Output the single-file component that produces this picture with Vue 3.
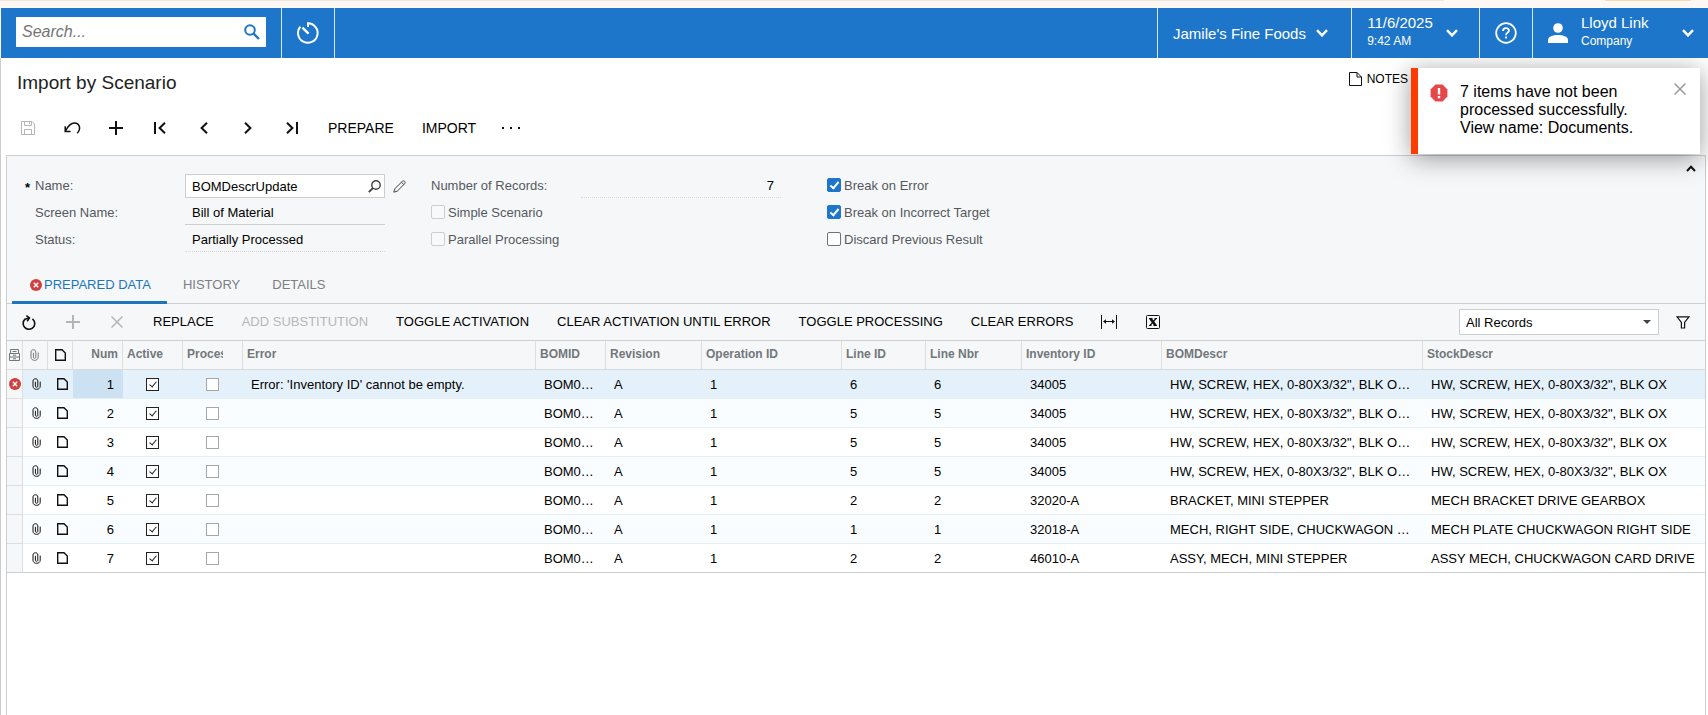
<template>
  <div class="page">
    <div class="strip">
      <span class="strip-tab"></span>
      <span class="strip-mark"></span>
    </div>

    <header class="topbar">
      <form class="search" @submit.prevent>
        <input v-model="search" type="text" placeholder="Search..." aria-label="Search" />
        <button type="submit" aria-label="Run search">
          <svg width="16" height="16" viewBox="0 0 16 16" fill="none" stroke="#1d76c9" stroke-width="2">
            <circle cx="6" cy="6" r="4.8" />
            <path d="M9.6 9.6 15 15" stroke-width="2.4" />
          </svg>
        </button>
      </form>
      <button class="top-item recent" aria-label="Recent">
        <svg width="24" height="24" viewBox="0 0 24 24" fill="none" stroke="#fff" stroke-width="2">
          <path d="M12 6V2.2A9.8 9.8 0 1 1 4.4 5.6" />
          <path d="M6.4 6.6 12.6 12.6" stroke-width="2.4" />
        </svg>
      </button>
      <span class="spacer"></span>
      <button class="top-item tenant">
        <span>Jamile's Fine Foods</span>
        <svg class="caret" viewBox="0 0 12 8"><path d="M1 1.2 6 6.4 11 1.2" /></svg>
      </button>
      <button class="top-item date">
        <span class="stack">
          <span>11/6/2025</span>
          <small>9:42 AM</small>
        </span>
        <svg class="caret" viewBox="0 0 12 8"><path d="M1 1.2 6 6.4 11 1.2" /></svg>
      </button>
      <button class="top-item help" aria-label="Help">
        <svg width="22" height="22" viewBox="0 0 22 22" fill="none" stroke="#fff" stroke-width="1.8">
          <circle cx="11" cy="11" r="9.8" />
          <path d="M8 9C8 5.2 14 5.2 14 8.6 14 10.6 11 10.8 11 13.2" />
          <path d="M11 14.6V16.6" />
        </svg>
      </button>
      <button class="top-item user">
        <svg width="20" height="20" viewBox="0 0 20 20" fill="#fff">
          <circle cx="10" cy="5" r="4.8" />
          <path d="M0 20V17C0 13.4 5 12 10 12S20 13.4 20 17V20Z" />
        </svg>
        <span class="stack">
          <span>Lloyd Link</span>
          <small>Company</small>
        </span>
        <svg class="caret" viewBox="0 0 12 8"><path d="M1 1.2 6 6.4 11 1.2" /></svg>
      </button>
    </header>

    <main class="content">
      <div class="title-row">
        <h1>Import by Scenario</h1>
        <button class="notes">
          <svg width="13" height="14" viewBox="0 0 13 14" fill="none" stroke="#111">
            <path d="M.5.5H8L12.5 5V13.5H.5ZM8 .5V5H12.5" />
          </svg>
          NOTES
        </button>
      </div>

      <div class="toolbar main-toolbar">
        <button class="icon-btn" disabled aria-label="Save">
          <svg width="14" height="14" viewBox="0 0 14 14" fill="none" stroke="#b5b5b5">
            <path d="M.5.5H11L13.5 3V13.5H.5ZM3.5.5V4.5H10.5V.5M8.5 1V3M3.5 13.5V8.5H10.5V13.5" />
          </svg>
        </button>
        <button class="icon-btn" aria-label="Undo">
          <svg width="17" height="12" viewBox="0 0 17 12" fill="none" stroke="#111" stroke-width="1.5">
            <path d="M1.5 9C4 4 7 1 10.5 1 15.5 1 17.5 7 13.2 11.2M1.2 4.2V9.4H6.6" />
          </svg>
        </button>
        <button class="icon-btn" aria-label="Add">
          <svg width="14" height="14" viewBox="0 0 14 14" stroke="#111" stroke-width="2">
            <path d="M7 0V14M0 7H14" />
          </svg>
        </button>
        <button class="icon-btn" aria-label="First">
          <svg width="12" height="12" viewBox="0 0 12 12" fill="none" stroke="#111" stroke-width="2">
            <path d="M1 0V12M11 .8 5.6 6 11 11.2" />
          </svg>
        </button>
        <button class="icon-btn" aria-label="Previous">
          <svg width="8" height="12" viewBox="0 0 8 12" fill="none" stroke="#111" stroke-width="2">
            <path d="M7 .8 1.6 6 7 11.2" />
          </svg>
        </button>
        <button class="icon-btn" aria-label="Next">
          <svg width="8" height="12" viewBox="0 0 8 12" fill="none" stroke="#111" stroke-width="2">
            <path d="M1 .8 6.4 6 1 11.2" />
          </svg>
        </button>
        <button class="icon-btn" aria-label="Last">
          <svg width="12" height="12" viewBox="0 0 12 12" fill="none" stroke="#111" stroke-width="2">
            <path d="M11 0V12M1 .8 6.4 6 1 11.2" />
          </svg>
        </button>
        <button class="text-btn">PREPARE</button>
        <button class="text-btn">IMPORT</button>
        <button class="icon-btn more" aria-label="More">
          <svg width="18" height="2" viewBox="0 0 18 2" fill="#111">
            <path d="M0 0H2V2H0ZM8 0H10V2H8ZM16 0H18V2H16Z" />
          </svg>
        </button>
      </div>

      <div class="panel">
        <section class="form">
          <button class="collapse" aria-label="Collapse">
            <svg width="10" height="7" viewBox="0 0 10 7" fill="none" stroke="#111" stroke-width="2">
              <path d="M1 6 5 1.8 9 6" />
            </svg>
          </button>
          <div class="form-col">
            <div class="field">
              <label class="required" for="name">Name:</label>
              <span class="lookup">
                <input id="name" v-model="scenario" type="text" />
                <button aria-label="Select scenario">
                  <svg width="13" height="13" viewBox="0 0 13 13" fill="none" stroke="#444" stroke-width="1.4">
                    <circle cx="8" cy="5" r="4.2" />
                    <path d="M5 8 .8 12.2" stroke-width="1.8" />
                  </svg>
                </button>
              </span>
              <button class="edit" aria-label="Edit scenario">
                <svg width="13" height="13" viewBox="0 0 13 13" fill="none" stroke="#444">
                  <path d="M.8 12.2 1.8 8.8 9.6 1C10.8 0 13 2 12 3.4L4.2 11.2ZM8.4 2.2 10.8 4.6" />
                </svg>
              </button>
            </div>
            <div class="field">
              <label for="screen">Screen Name:</label>
              <input id="screen" class="readonly solid" value="Bill of Material" readonly />
            </div>
            <div class="field">
              <label for="status">Status:</label>
              <input id="status" class="readonly" value="Partially Processed" readonly />
            </div>
          </div>
          <div class="form-col">
            <div class="field">
              <label for="records">Number of Records:</label>
              <input id="records" class="readonly number" value="7" readonly />
            </div>
            <label v-for="o in modes" :key="o.label" class="check">
              <input v-model="o.on" type="checkbox" disabled />
              {{ o.label }}
            </label>
          </div>
          <div class="form-col">
            <label v-for="o in options" :key="o.label" class="check">
              <input v-model="o.on" type="checkbox" />
              {{ o.label }}
            </label>
          </div>
        </section>

        <nav class="tabs">
          <button
            v-for="tab in tabs"
            :key="tab"
            class="tab"
            :class="{ active: tab === activeTab }"
            @click="activeTab = tab"
          >
            <svg v-if="tab === 'PREPARED DATA'" width="12" height="12" viewBox="0 0 12 12">
              <circle cx="6" cy="6" r="6" fill="#d23f3f" />
              <path d="M3.8 3.8 8.2 8.2M8.2 3.8 3.8 8.2" stroke="#fff" stroke-width="1.4" />
            </svg>
            <span>{{ tab }}</span>
          </button>
        </nav>

        <div class="toolbar grid-toolbar">
          <button class="icon-btn" aria-label="Refresh">
            <svg width="14" height="15" viewBox="0 0 14 15" fill="none" stroke="#111" stroke-width="1.6">
              <path d="M10.4 3.8A5.8 5.8 0 1 1 3 4.2L7 3" />
              <path d="M4.4.6 7.4 3 5.2 6.2" />
            </svg>
          </button>
          <button class="icon-btn" disabled aria-label="Add row">
            <svg width="14" height="14" viewBox="0 0 14 14" stroke="#b5b5b5" stroke-width="2">
              <path d="M7 0V14M0 7H14" />
            </svg>
          </button>
          <button class="icon-btn" disabled aria-label="Delete row">
            <svg width="12" height="12" viewBox="0 0 12 12" stroke="#b5b5b5" stroke-width="1.5">
              <path d="M.5.5 11.5 11.5M11.5.5.5 11.5" />
            </svg>
          </button>
          <button v-for="a in actions" :key="a.label" class="text-btn" :disabled="a.disabled">
            {{ a.label }}
          </button>
          <button class="icon-btn" aria-label="Fit columns">
            <svg width="16" height="14" viewBox="0 0 16 14" stroke="#111" fill="#111">
              <path d="M.5 0V14M15.5 0V14M3 6.5H13" fill="none" />
              <path d="M2 6.5 5 4.2V8.8ZM14 6.5 11 4.2V8.8Z" stroke="none" />
            </svg>
          </button>
          <button class="icon-btn" aria-label="Export to Excel">
            <svg width="14" height="14" viewBox="0 0 14 14" fill="none" stroke="#111">
              <rect x=".5" y=".5" width="13" height="13" rx="1" />
              <path d="M4.4 3.5 9.6 10.5" stroke-width="2.6" />
              <path d="M10 3.5 4 10.5M3 3.5H6.5M8.5 3.5H11M3 10.5H5.5M7.5 10.5H11" stroke-width="1.2" />
            </svg>
          </button>
          <span class="spacer"></span>
          <span class="filter">
            <select v-model="filter" aria-label="Filter">
              <option>All Records</option>
            </select>
            <svg width="8" height="4" viewBox="0 0 8 4" fill="#444"><path d="M0 0H8L4 4Z" /></svg>
          </span>
          <button class="icon-btn" aria-label="Filter settings">
            <svg width="14" height="13" viewBox="0 0 14 13" fill="none" stroke="#111" stroke-width="1.2">
              <path d="M1 .8H13L8.6 6.4V12H5.4V6.4Z" />
            </svg>
          </button>
        </div>

        <table class="grid">
          <colgroup>
            <col v-for="(w, i) in widths" :key="i" :style="{ width: w ? w + 'px' : 'auto' }" />
          </colgroup>
          <thead>
            <tr>
              <th class="mark">
                <svg width="11" height="12" viewBox="0 0 11 12" fill="none" stroke="#72777b">
                  <path d="M1.5.5H9.5V4.5H1.5ZM.5 4.5H10.5V11.5H.5ZM.5 8H10.5M3.5 2.5H7.5M4 6.2H7M4 9.8H7" />
                </svg>
              </th>
              <th class="icon">
                <svg class="clip" width="9" height="12" viewBox="0 0 9 12" stroke="#72777b">
                  <path d="M3.4 3.8V8.4C3.4 9.6 5.8 9.6 5.8 8.4V3C5.8 0 1 0 1 3V8.2C1 12.4 8.2 12.4 8.2 8.2V3.6" />
                </svg>
              </th>
              <th class="icon">
                <svg class="doc" width="11" height="12" viewBox="0 0 11 12"><path d="M.7.7H7L10.3 4V11.3H.7Z" /></svg>
              </th>
              <th class="num">Num</th>
              <th>Active</th>
              <th class="cut"><div>Processed</div></th>
              <th v-for="h in headers" :key="h">{{ h }}</th>
            </tr>
          </thead>
          <tbody>
            <tr v-for="(row, i) in rows" :key="i" :class="{ selected: i === 0 }">
              <td class="mark">
                <svg v-if="row[0]" width="12" height="12" viewBox="0 0 12 12">
                  <circle cx="6" cy="6" r="6" fill="#d23f3f" />
                  <path d="M3.8 3.8 8.2 8.2M8.2 3.8 3.8 8.2" stroke="#fff" stroke-width="1.4" />
                </svg>
              </td>
              <td class="icon">
                <svg class="clip" width="9" height="12" viewBox="0 0 9 12" stroke="#111">
                  <path d="M3.4 3.8V8.4C3.4 9.6 5.8 9.6 5.8 8.4V3C5.8 0 1 0 1 3V8.2C1 12.4 8.2 12.4 8.2 8.2V3.6" />
                </svg>
              </td>
              <td class="icon">
                <svg class="doc" width="11" height="12" viewBox="0 0 11 12"><path d="M.7.7H7L10.3 4V11.3H.7Z" /></svg>
              </td>
              <td class="num">{{ i + 1 }}</td>
              <td class="tick"><input type="checkbox" checked aria-label="Active" /></td>
              <td class="tick"><input type="checkbox" aria-label="Processed" /></td>
              <td v-for="(cell, c) in row" :key="c">{{ cell }}</td>
            </tr>
          </tbody>
        </table>
      </div>
    </main>

    <div v-if="toast" class="toast" role="alert">
      <svg width="18" height="18" viewBox="0 0 18 18">
        <path d="M5.4.6H12.6L17.4 5.4V12.6L12.6 17.4H5.4L.6 12.6V5.4Z" fill="#e5484b" />
        <path d="M9 4V10.4M9 12V14.2" stroke="#fff" stroke-width="2.4" />
      </svg>
      <p>7 items have not been processed successfully. View name: Documents.</p>
      <button aria-label="Close" @click="toast = false">
        <svg width="12" height="12" viewBox="0 0 12 12" stroke="#999" stroke-width="1.5">
          <path d="M.5.5 11.5 11.5M11.5.5.5 11.5" />
        </svg>
      </button>
    </div>
  </div>
</template>

<script setup>
import { ref, reactive } from "vue"

const search = ref("")
const scenario = ref("BOMDescrUpdate")
const filter = ref("All Records")
const toast = ref(true)

const modes = reactive([
  { label: "Simple Scenario", on: false },
  { label: "Parallel Processing", on: false },
])

const options = reactive([
  { label: "Break on Error", on: true },
  { label: "Break on Incorrect Target", on: true },
  { label: "Discard Previous Result", on: false },
])

const tabs = ["PREPARED DATA", "HISTORY", "DETAILS"]
const activeTab = ref("PREPARED DATA")

const actions = [
  { label: "REPLACE" },
  { label: "ADD SUBSTITUTION", disabled: true },
  { label: "TOGGLE ACTIVATION" },
  { label: "CLEAR ACTIVATION UNTIL ERROR" },
  { label: "TOGGLE PROCESSING" },
  { label: "CLEAR ERRORS" },
]

// the last column takes whatever is left
const widths = [16, 25, 25, 50, 60, 60, 293, 70, 96, 140, 84, 96, 140, 261, 0]

const headers = [
  "Error",
  "BOMID",
  "Revision",
  "Operation ID",
  "Line ID",
  "Line Nbr",
  "Inventory ID",
  "BOMDescr",
  "StockDescr",
]

const screw = ["HW, SCREW, HEX, 0-80X3/32\", BLK O…", "HW, SCREW, HEX, 0-80X3/32\", BLK OX"]

const rows = [
  ["Error: 'Inventory ID' cannot be empty.", "BOM0…", "A", "1", "6", "6", "34005", ...screw],
  ["", "BOM0…", "A", "1", "5", "5", "34005", ...screw],
  ["", "BOM0…", "A", "1", "5", "5", "34005", ...screw],
  ["", "BOM0…", "A", "1", "5", "5", "34005", ...screw],
  ["", "BOM0…", "A", "1", "2", "2", "32020-A", "BRACKET, MINI STEPPER", "MECH BRACKET DRIVE GEARBOX"],
  ["", "BOM0…", "A", "1", "1", "1", "32018-A", "MECH, RIGHT SIDE, CHUCKWAGON …", "MECH PLATE CHUCKWAGON RIGHT SIDE"],
  ["", "BOM0…", "A", "1", "2", "2", "46010-A", "ASSY, MECH, MINI STEPPER", "ASSY MECH, CHUCKWAGON CARD DRIVE"],
]
</script>

<style>
body {
  background: #fff;
}
</style>

<style scoped>
.page {
  position: relative;
  display: flex;
  flex-direction: column;
  min-height: 100vh;
  font-family: "Liberation Sans", Arial, sans-serif;
  font-size: 13px;
  color: #000;
}

.page *,
.page *::after {
  box-sizing: border-box;
}

button,
input,
select {
  font: inherit;
  color: inherit;
}

button {
  display: flex;
  align-items: center;
  justify-content: center;
  padding: 0;
  border: 0;
  background: none;
  white-space: nowrap;
}

svg {
  display: block;
  flex: none;
}

.spacer {
  flex: 1;
}

.strip {
  display: flex;
  height: 8px;
  background: #fdf8f3;
}

.strip-tab {
  flex: 1;
  height: 1px;
  margin-right: 161px;
  background: #f1e8dc;
}

.strip-mark {
  width: 86px;
  height: 1px;
  margin-right: 17px;
  background: #f6dcae;
}

.topbar {
  position: relative;
  z-index: 2;
  display: flex;
  height: 50px;
  margin-left: 1px;
  background: #1d76c9;
  color: #fff;
  font-size: 15px;
}

.search {
  display: flex;
  width: 250px;
  height: 30px;
  margin: 9px 15px 0;
  background: #fff;
}

.search input {
  flex: 1;
  min-width: 0;
  padding: 0 0 0 6px;
  border: 0;
  outline: 0;
  background: none;
  color: #333;
  font-size: 16px;
  font-style: italic;
}

.search input::placeholder {
  color: #757575;
}

.search button {
  width: 28px;
}

.top-item {
  border-left: 1px solid #d5e6f5;
}

.recent {
  width: 54px;
  border-right: 1px solid #d5e6f5;
}

.tenant {
  gap: 10px;
  width: 194px;
  padding-right: 8px;
}

.date {
  width: 128px;
  gap: 13px;
  padding-right: 6px;
}

.help {
  width: 53px;
}

.user {
  width: 176px;
  gap: 13px;
  justify-content: flex-start;
  padding: 0 14px 0 15px;
}

.user .caret {
  margin-left: auto;
}

.stack {
  display: flex;
  flex-direction: column;
  padding-bottom: 2px;
  text-align: left;
  line-height: 18px;
}

.stack small {
  font-size: 12px;
}

.caret {
  width: 12px;
  height: 8px;
  fill: none;
  stroke: #fff;
  stroke-width: 2.4;
}

.content {
  flex: 1;
  display: flex;
  flex-direction: column;
  padding: 0 2px 0 5px;
  border-left: 1px solid #ccc;
}

.title-row {
  display: flex;
  align-items: flex-start;
  justify-content: space-between;
  height: 48px;
  padding: 0 298px 0 11px;
}

h1 {
  margin: 13px 0 0;
  font-size: 19px;
  font-weight: normal;
  line-height: 24px;
  color: #222;
}

.notes {
  gap: 5px;
  margin-top: 14px;
  font-size: 12px;
}

.toolbar {
  display: flex;
  align-items: center;
}

.main-toolbar {
  height: 49px;
  padding-bottom: 6px;
  font-size: 14px;
}

.icon-btn {
  width: 44px;
  height: 28px;
}

.more {
  width: 42px;
}

.text-btn {
  height: 28px;
  padding: 0 14px;
}

.text-btn:disabled {
  color: #b5b8ba;
}

.panel {
  flex: 1;
  border: 1px solid #ccced0;
  border-bottom: 0;
}

.form {
  position: relative;
  display: grid;
  grid-template-columns: 396px 396px 1fr;
  padding: 18px 0 16px 28px;
  background: #f5f7f9;
  color: #55595d;
}

.collapse {
  position: absolute;
  top: 9px;
  right: 9px;
}

.form-col {
  display: flex;
  flex-direction: column;
  gap: 3px;
}

.field {
  display: flex;
  align-items: center;
  height: 24px;
}

.field label {
  width: 150px;
  padding-bottom: 2px;
}

.required {
  position: relative;
}

.required::before {
  content: "*";
  position: absolute;
  left: -10px;
  top: 2px;
  color: #000;
  font-weight: bold;
}

.lookup {
  display: flex;
  width: 200px;
  height: 24px;
  border: 1px solid #ccced0;
  background: #fff;
}

.lookup input {
  flex: 1;
  min-width: 0;
  padding: 0 6px;
  border: 0;
  outline: 0;
  background: none;
  color: #000;
}

.lookup button {
  width: 20px;
}

.edit {
  margin-left: 8px;
}

.readonly {
  width: 200px;
  height: 24px;
  padding: 0 7px;
  border: 0;
  border-bottom: 1px dotted #d8dadc;
  outline: 0;
  background: none;
  color: #000;
}

.readonly.solid {
  border-bottom: 1px solid #ccced0;
}

.readonly.number {
  text-align: right;
}

.check {
  display: flex;
  align-items: center;
  gap: 3px;
  height: 24px;
  padding-bottom: 2px;
}

input[type="checkbox"] {
  appearance: none;
  position: relative;
  flex: none;
  width: 14px;
  height: 14px;
  margin: 0;
  border: 1px solid #6f7375;
  border-radius: 2px;
  background: #fff;
}

input[type="checkbox"]:disabled {
  border-color: #ccced0;
  background: #f8f9fa;
}

.check input:checked {
  border-color: #1d76c9;
  background: #1d76c9;
}

input[type="checkbox"]:checked::after {
  content: "";
  position: absolute;
  left: 4px;
  top: 1px;
  width: 5px;
  height: 9px;
  border: solid #fff;
  border-width: 0 2px 2px 0;
  transform: rotate(40deg);
}

.tabs {
  display: flex;
  height: 36px;
  padding-left: 5px;
  border-bottom: 1px solid #ccced0;
  background: #f5f7f9;
}

.tab {
  height: 36px;
  gap: 2px;
  padding: 0 16px;
  border-bottom: 3px solid transparent;
  color: #7c8083;
}

.tab.active {
  padding: 0 16px 0 18px;
  color: #1d76bd;
  border-bottom-color: #1d76bd;
}

.grid-toolbar {
  height: 37px;
  border-bottom: 1px solid #ccced0;
  background: #f5f7f9;
}

.grid-toolbar .text-btn {
  padding-bottom: 2px;
}

.filter {
  position: relative;
  margin-right: 2px;
}

.filter select {
  appearance: none;
  display: block;
  width: 200px;
  height: 26px;
  padding: 0 6px;
  border: 1px solid #ccced0;
  border-radius: 0;
  background: #fff;
}

.filter svg {
  position: absolute;
  right: 8px;
  top: 11px;
  pointer-events: none;
}

.grid {
  width: 100%;
  table-layout: fixed;
  border-spacing: 0;
}

.grid th,
.grid td {
  height: 29px;
  overflow: hidden;
  white-space: nowrap;
  text-align: left;
}

.grid th {
  padding: 0 4px 2px;
  border-right: 1px solid #dcdee0;
  border-bottom: 1px solid #d8dadc;
  background: #f5f7f9;
  color: #72777b;
  font-size: 12px;
}

.grid th:last-child {
  border-right: 0;
}

.grid td {
  padding: 0 8px;
  border-bottom: 1px solid #e4eff5;
}

.grid tbody tr:nth-child(even) {
  background: #fafdff;
}

.grid tr.selected {
  background: #e5f1fa;
}

.grid tr:last-child td {
  border-bottom-color: #ccced0;
}

.grid .cut {
  padding-right: 19px;
}

.cut div {
  overflow: hidden;
}

.grid .num {
  text-align: right;
}

.grid td.num {
  padding-right: 9px;
}

.selected .num {
  background: #cce2f3;
}

.grid .mark {
  padding: 0 2px;
  border-right: 1px solid #dcdee0;
  border-bottom-color: #dcdee0;
  background: #f5f7f9;
}

.grid .icon {
  padding: 0 7px;
}

.grid td.icon {
  padding-left: 9px;
}

.clip {
  fill: none;
}

.doc {
  fill: none;
  stroke: #111;
  stroke-width: 1.4;
}

.grid .tick {
  padding: 0 1px 0 0;
}

.tick input[type="checkbox"] {
  display: block;
  width: 13px;
  height: 13px;
  margin: 0 auto;
  border-color: #a5a8aa;
  border-radius: 0;
}

.tick input[type="checkbox"]:checked {
  border-color: #222;
}

.tick input[type="checkbox"]:checked::after {
  left: 4px;
  top: 1px;
  width: 4px;
  height: 7px;
  border-color: #222;
  border-width: 0 1px 1px 0;
}

.toast {
  position: absolute;
  z-index: 1;
  top: 68px;
  right: 8px;
  display: flex;
  align-items: flex-start;
  width: 289px;
  height: 86px;
  padding: 15px 14px 0 12px;
  border-left: 7px solid #ff3c00;
  background: #fff;
  box-shadow: 0 4px 24px rgba(0, 0, 0, 0.4);
}

.toast p {
  flex: 1;
  margin: 0 24px 0 12px;
  font-size: 16px;
  line-height: 18px;
}

.toast > svg {
  margin-top: 1px;
}
</style>
